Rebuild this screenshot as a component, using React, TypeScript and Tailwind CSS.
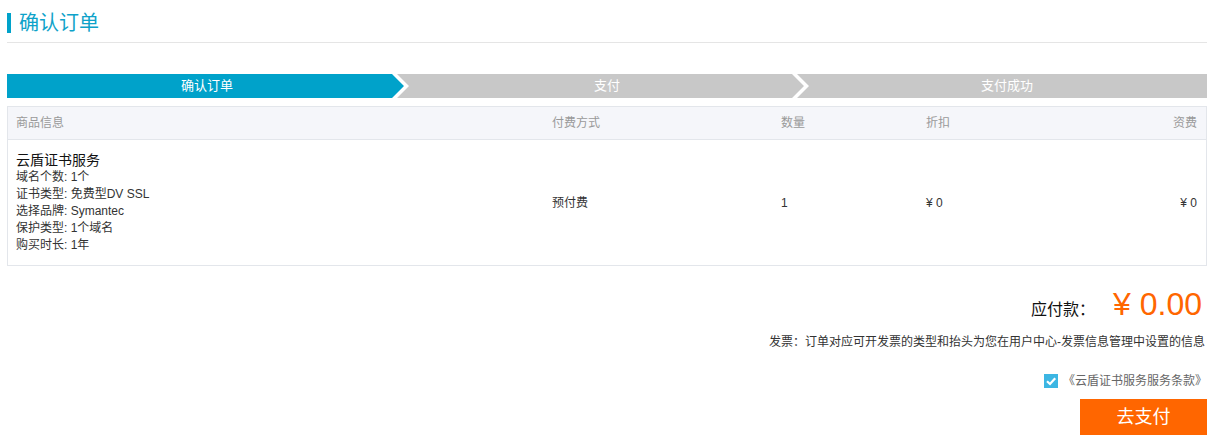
import React from "react";

const font = { fontFamily: '"Liberation Sans", "Noto Sans CJK SC", Arial, sans-serif' };

function Chevron({ left }: { left: number }) {
  return (
    <svg
      className="absolute top-0"
      style={{ left }}
      width="22"
      height="24"
      viewBox="0 0 22 24"
    >
      <polygon points="2,0 7,0 19,12 7,24 2,24 14,12" fill="#ffffff" />
    </svg>
  );
}

export default function App() {
  return (
    <div className="w-[1212px] h-[442px] bg-white pl-[7px] pr-[5px] text-[#333]" style={font}>
      {/* title */}
      <div className="flex items-center pt-[13px] pb-[9px] border-b border-[#e5e5e5]">
        <div className="w-[4px] h-[20px] bg-[#00a2ca]" />
        <div className="ml-[8px] text-[20px] leading-[20px] text-[#0ea2c9]">确认订单</div>
      </div>

      {/* steps */}
      <div className="relative mt-[31px] flex h-[24px] bg-[#c8c8c8] text-[13px] text-white">
        <div className="flex-1 flex items-center justify-center bg-[#00a2ca] [clip-path:polygon(0_0,386px_0,398px_50%,386px_100%,0_100%)]">
          确认订单
        </div>
        <div className="flex-1 flex items-center justify-center">支付</div>
        <div className="flex-1 flex items-center justify-center">支付成功</div>
        <Chevron left={383} />
        <Chevron left={783} />
      </div>

      {/* table */}
      <div className="mt-[8px] border border-[#e3e6eb] text-[12px]">
        <div className="grid grid-cols-[536px_229px_145px_1fr_auto] items-center h-[33px] pl-[8px] pr-[9px] bg-[#f5f6fa] border-b border-[#e3e6eb] text-[#999]">
          <div>商品信息</div>
          <div>付费方式</div>
          <div>数量</div>
          <div>折扣</div>
          <div className="text-right">资费</div>
        </div>
        <div className="grid grid-cols-[536px_229px_145px_1fr_auto] items-center pl-[8px] pr-[9px] pt-[12px] pb-[11px]">
          <div className="leading-[17px]">
            <div className="text-[14px] text-[#111]">云盾证书服务</div>
            <div>域名个数: 1个</div>
            <div>证书类型: 免费型DV SSL</div>
            <div>选择品牌: Symantec</div>
            <div>保护类型: 1个域名</div>
            <div>购买时长: 1年</div>
          </div>
          <div>预付费</div>
          <div>1</div>
          <div>¥ 0</div>
          <div className="text-right">¥ 0</div>
        </div>
      </div>

      {/* summary */}
      <div className="flex flex-col items-end">
        <div className="mt-[18px] mr-[5px] flex items-baseline">
          <span className="text-[16px] text-[#111]">应付款：</span>
          <span className="ml-[18px] text-[32px] leading-[40px] text-[#ff6600]">¥ 0.00</span>
        </div>
        <div className="mt-[10px] mr-[2px] text-[12px] leading-[16px] text-[#333]">
          发票：订单对应可开发票的类型和抬头为您在用户中心-发票信息管理中设置的信息
        </div>
        <div className="mt-[23px] mr-0 flex items-center">
          <div className="w-[14px] h-[14px] bg-[#3cb6e3] flex items-center justify-center">
            <svg width="12" height="12" viewBox="0 0 12 12">
              <polyline points="2,6.2 5,9 10.2,3.2" fill="none" stroke="#fff" strokeWidth="2.2" />
            </svg>
          </div>
          <span className="ml-[5px] text-[12px] leading-[16px] text-[#666]">《云盾证书服务服务条款》</span>
        </div>
        <button className="mt-[10px] w-[127px] h-[36px] bg-[#ff6600] text-white text-[18px]">去支付</button>
      </div>
    </div>
  );
}
